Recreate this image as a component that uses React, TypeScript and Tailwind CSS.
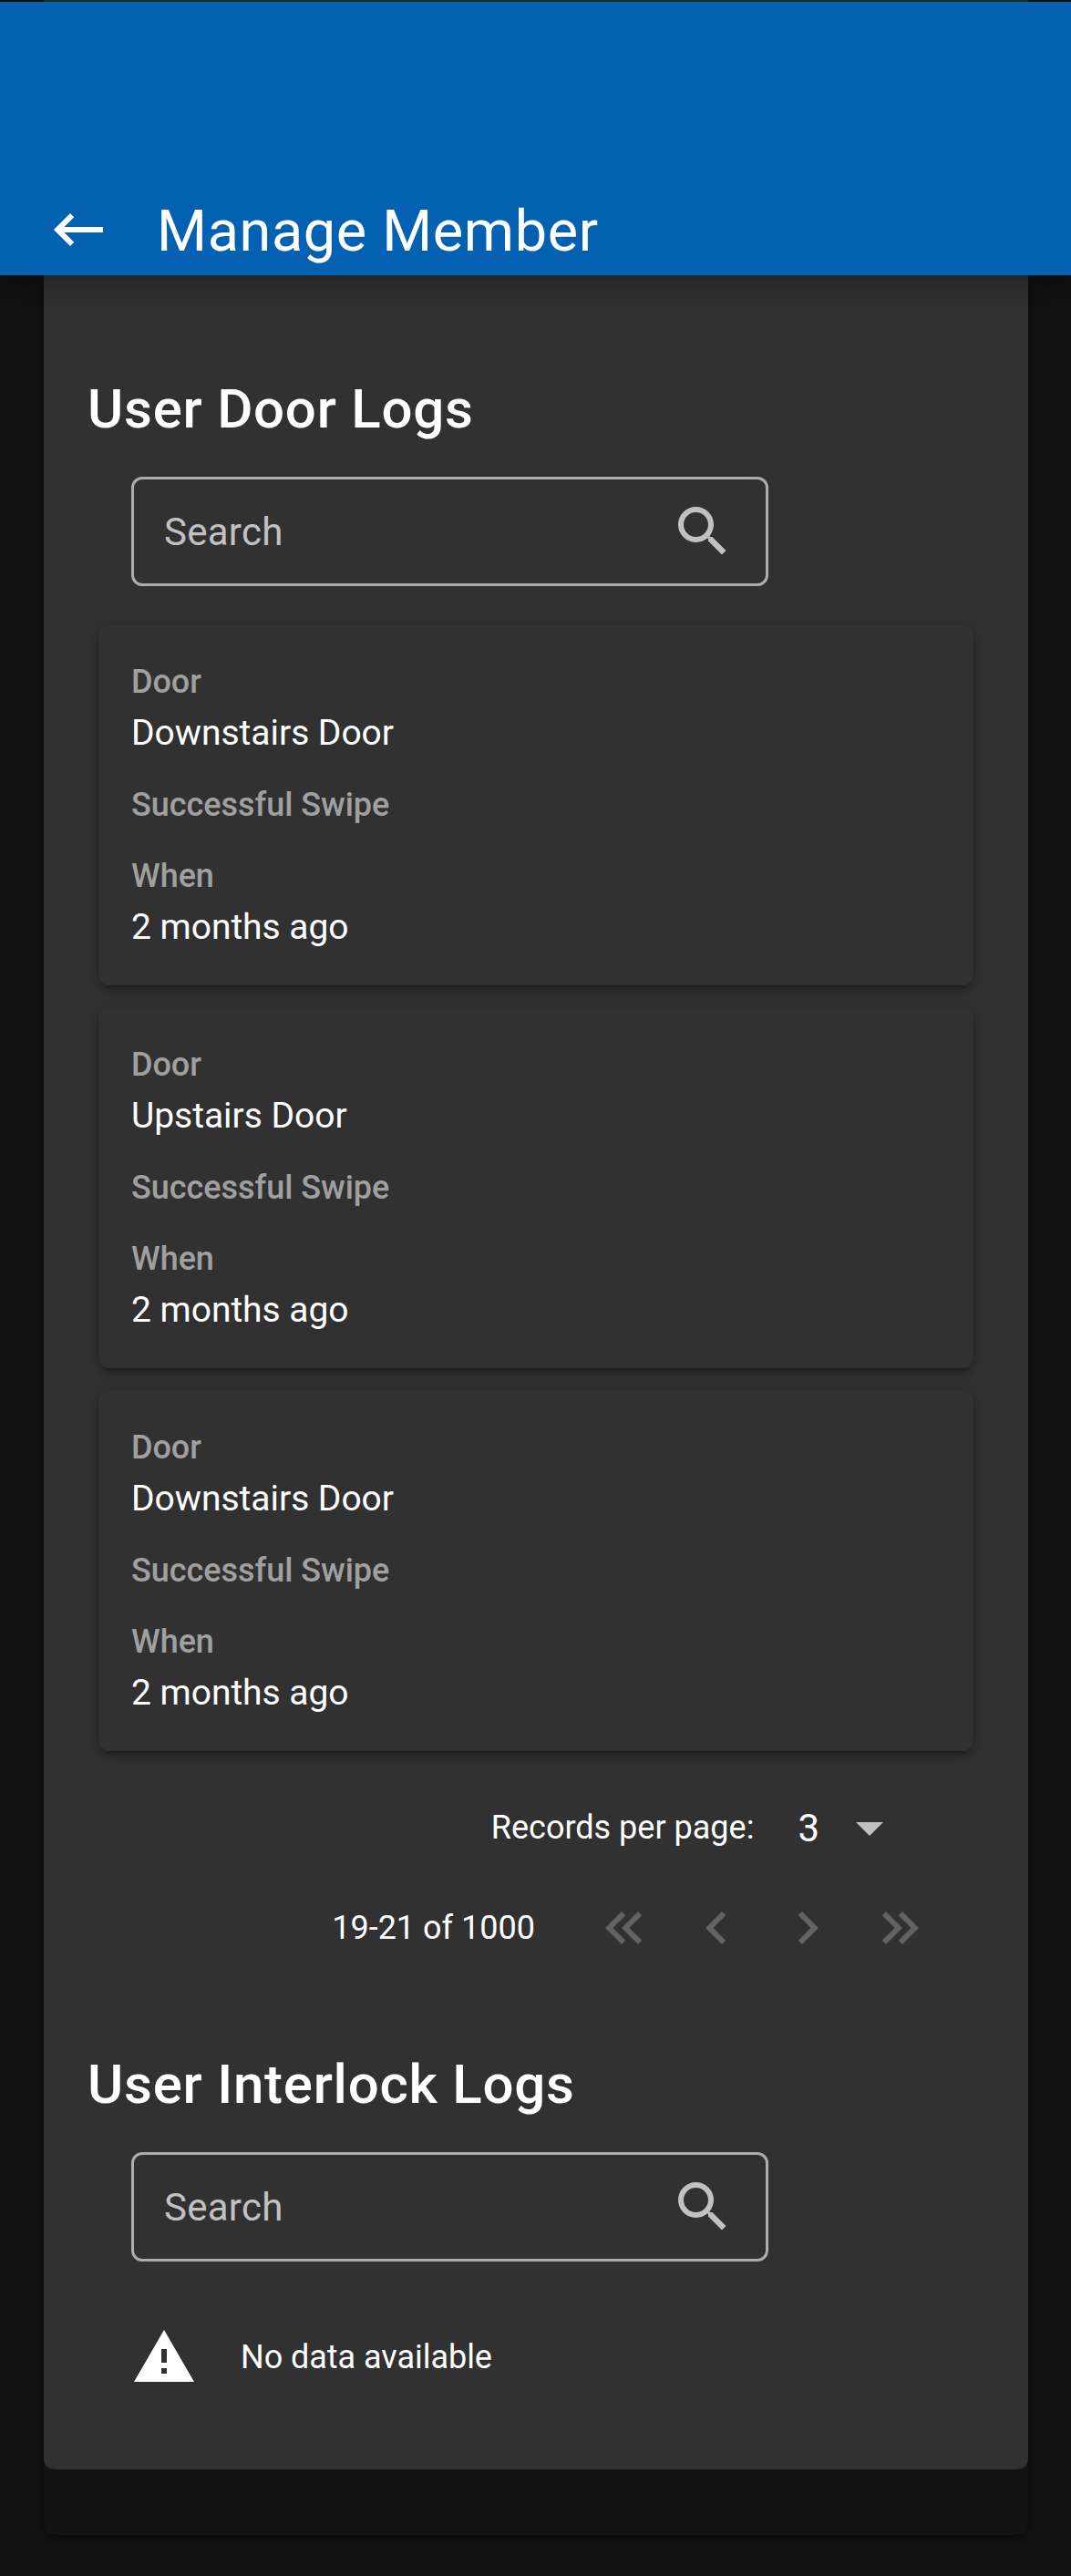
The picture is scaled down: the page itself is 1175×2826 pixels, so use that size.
import React from "react";

const ICONS = {
  back: "M21,11H6.83L10.41,7.41L9,6L3,12L9,18L10.41,16.58L6.83,13H21V11Z",
  search:
    "M9.5,3A6.5,6.5 0 0,1 16,9.5C16,11.11 15.41,12.59 14.44,13.73L14.71,14H15.5L20.5,19L19,20.5L14,15.5V14.71L13.73,14.44C12.59,15.41 11.11,16 9.5,16A6.5,6.5 0 0,1 3,9.5A6.5,6.5 0 0,1 9.5,3M9.5,5C7,5 5,7 5,9.5C5,12 7,14 9.5,14C12,14 14,12 14,9.5C14,7 12,5 9.5,5Z",
  dropdown: "M7,10L12,15L17,10H7Z",
  first:
    "M18.41,7.41L17,6L11,12L17,18L18.41,16.59L13.83,12L18.41,7.41M12.41,7.41L11,6L5,12L11,18L12.41,16.59L7.83,12L12.41,7.41Z",
  previous: "M15.41,16.58L10.83,12L15.41,7.41L14,6L8,12L14,18L15.41,16.58Z",
  next: "M8.59,16.58L13.17,12L8.59,7.41L10,6L16,12L10,18L8.59,16.58Z",
  last: "M5.59,7.41L7,6L13,12L7,18L5.59,16.59L10.17,12L5.59,7.41M11.59,7.41L13,6L19,12L13,18L11.59,16.59L16.17,12L11.59,7.41Z",
  alert: "M13,14H11V9H13M13,18H11V16H13M1,21H23L12,2L1,21Z",
};

function Icon({ name, className = "" }: { name: keyof typeof ICONS; className?: string }) {
  return (
    <svg viewBox="0 0 24 24" className={`size-[72px] shrink-0 ${className}`} fill="currentColor" aria-hidden="true">
      <path d={ICONS[name]} />
    </svg>
  );
}

function Heading({ children }: { children: React.ReactNode }) {
  return <h2 className="pl-12 text-[60px] leading-[96px] font-medium tracking-[0.0125em]">{children}</h2>;
}

function SearchField() {
  return (
    <div className="mt-[26px] ml-24 flex h-[120px] w-[699px] items-center justify-between rounded-[12px] border-[3px] border-[#adadad] px-[33px] text-[#c1c1c1]">
      <span className="pt-0.5 text-[42px] leading-[72px] tracking-[0.006em]">Search</span>
      <Icon name="search" />
    </div>
  );
}

function LogCard({ door, when }: { door: string; when: string }) {
  return (
    <article className="flex h-[396px] flex-col gap-6 rounded-[12px] bg-[#313131] p-9 shadow-[0_3px_15px_rgba(0,0,0,0.2),0_6px_6px_rgba(0,0,0,0.14),0_9px_3px_-6px_rgba(0,0,0,0.12)]">
      <Field label="Door" value={door} />
      <Field label="Successful Swipe" />
      <Field label="When" value={when} />
    </article>
  );
}

function Field({ label, value }: { label: string; value?: string }) {
  return (
    <div>
      <div className="text-[36px] leading-[54px] font-medium tracking-[-0.001em] text-[#a0a0a0]">{label}</div>
      {value && <div className="pt-0.5 text-[39px] leading-[55px] tracking-[-0.001em]">{value}</div>}
    </div>
  );
}

const LOGS = [
  { door: "Downstairs Door", when: "2 months ago" },
  { door: "Upstairs Door", when: "2 months ago" },
  { door: "Downstairs Door", when: "2 months ago" },
];

export default function App() {
  return (
    <div className="flex h-[2826px] w-[1175px] flex-col overflow-hidden bg-[#121212] font-[Roboto,sans-serif] text-white">
      <div className="mr-[47px] ml-12 h-[2px] shrink-0 bg-[#313131]" />
      <header className="relative z-10 flex h-[300px] shrink-0 items-end bg-[#0461b1] pl-[50px] shadow-[0_0_30px_6px_rgba(0,0,0,0.2),0_0_30px_rgba(0,0,0,0.24)]">
        <Icon name="back" className="mb-[14px]" />
        <h1 className="mb-px ml-[50px] text-[63px] leading-[94px] tracking-[0.01em]">Manage Member</h1>
      </header>
      <main className="mr-[47px] ml-12 h-[2479px] shrink-0 rounded-b-[12px] shadow-[0_3px_15px_rgba(0,0,0,0.2),0_6px_6px_rgba(0,0,0,0.14),0_9px_3px_-6px_rgba(0,0,0,0.12)]">
        <div className="h-[2407px] rounded-b-[12px] bg-[#313131] pt-[99px]">
          <section className="h-[1838px]">
            <Heading>User Door Logs</Heading>
            <SearchField />
            <div className="mt-[42px] mr-[60px] ml-[60px] flex flex-col gap-6">
              {LOGS.map((log, i) => (
                <LogCard key={i} door={log.door} when={log.when} />
              ))}
            </div>
            <div className="mt-12 mr-[138px] flex h-[72px] items-center justify-end">
              <span className="text-[36px]">Records per page:</span>
              <span className="ml-[48px] text-[42px]">3</span>
              <Icon name="dropdown" className="ml-[19px] text-[#c1c1c1]" />
            </div>
            <div className="mt-[38px] mr-[105px] flex h-[72px] items-center justify-end">
              <span className="mr-[62px] text-[36px]">19-21 of 1000</span>
              <div className="flex gap-[28.7px] text-[#636363]">
                <Icon name="first" />
                <Icon name="previous" />
                <Icon name="next" />
                <Icon name="last" />
              </div>
            </div>
          </section>
          <section>
            <Heading>User Interlock Logs</Heading>
            <SearchField />
            <div className="mt-[69px] ml-24 flex items-center">
              <Icon name="alert" />
              <span className="ml-12 text-[36px] tracking-[-0.001em]">No data available</span>
            </div>
          </section>
        </div>
      </main>
    </div>
  );
}
